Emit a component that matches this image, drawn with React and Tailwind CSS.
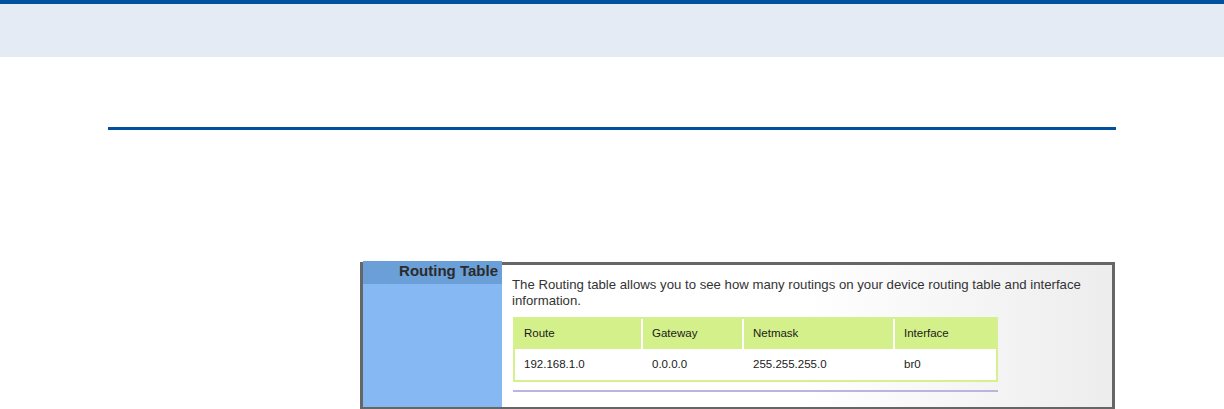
import React from "react";

const cols = [
  { name: "Route", value: "192.168.1.0", w: "w-[128px]" },
  { name: "Gateway", value: "0.0.0.0", w: "w-[101px]" },
  { name: "Netmask", value: "255.255.255.0", w: "w-[151px]" },
  { name: "Interface", value: "br0", w: "flex-1" },
];

function RoutingPanel() {
  return (
    <div className="ml-[360px] w-[755px] h-[148px] flex border-[3px] border-[#666666]">
      <div className="w-[139px] -mt-[4px] bg-[#86b9f3] flex flex-col">
        <div className="h-[23px] bg-[#6b9fd7] text-right pr-[4px] text-[15px] leading-[20px] font-bold text-[#2b2b2b]">
          Routing Table
        </div>
      </div>
      <div className="flex-1 bg-gradient-to-r from-white via-white to-[#ededed] pl-[10px] pt-[12px]">
        <p className="text-[13.2px] leading-[16px] text-[#333] pr-[14px]">
          The Routing table allows you to see how many routings on your device routing table and interface information.
        </p>
        <div className="mt-[8px] ml-[1px] w-[485px] border-2 border-[#d6f08e] bg-white">
          <div className="flex h-[30px] bg-[#d4f08a]">
            {cols.map((c, i) => (
              <div
                key={c.name}
                className={`${c.w} flex items-center pl-[9px] text-[11.5px] text-[#1a1a1a] ${i < 3 ? "border-r-2 border-white" : ""}`}
              >
                {c.name}
              </div>
            ))}
          </div>
          <div className="flex h-[31px]">
            {cols.map((c) => (
              <div key={c.name} className={`${c.w} flex items-center pl-[9px] text-[11.5px] text-[#1a1a1a]`}>
                {c.value}
              </div>
            ))}
          </div>
        </div>
        <div className="mt-[8px] ml-[1px] w-[485px] h-[2px] bg-[#bbb4dc]" />
      </div>
    </div>
  );
}

export default function App() {
  return (
    <div className="w-[1224px] h-[409px] overflow-hidden bg-white" style={{ fontFamily: "'Liberation Sans', Arial, sans-serif" }}>
      <div className="h-[4px] bg-[#00509e]" />
      <div className="h-[53px] bg-[#e4ebf4]" />
      <div className="mt-[70px] ml-[108px] w-[1008px] h-[3px] bg-[#00509e]" />
      <div className="mt-[132px]">
        <RoutingPanel />
      </div>
    </div>
  );
}
